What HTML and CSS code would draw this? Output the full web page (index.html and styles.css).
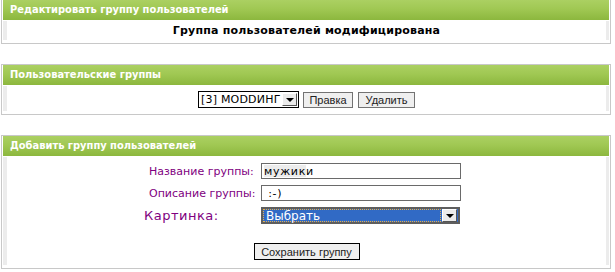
FILE: index.html
```html
<!DOCTYPE html>
<html lang="ru">
<head>
  <meta charset="UTF-8">
  <title>Группы пользователей</title>
  <link rel="stylesheet" href="styles.css">
</head>
<body>
  <!-- сообщение об изменении -->
  <div class="panel panel-first">
    <div class="panel-head">Редактировать группу пользователей</div>
    <div class="panel-body notice">Группа пользователей модифицирована</div>
  </div>

  <!-- выбор группы -->
  <div class="panel">
    <div class="panel-head">Пользовательские группы</div>
    <div class="panel-body group-pick">
      <div class="combo combo-group">
        <span class="combo-value">[3] MODDИНГ</span>
        <span class="combo-arrow"></span>
      </div>
      <button type="button" class="btn btn-edit">Правка</button>
      <button type="button" class="btn btn-del">Удалить</button>
    </div>
  </div>

  <!-- новая группа -->
  <div class="panel">
    <div class="panel-head">Добавить группу пользователей</div>
    <div class="panel-body">
      <div class="group-form">
        <label class="field-label">Название группы:</label>
        <input type="text" class="field field-name" value="мужики">
        <label class="field-label">Описание группы:</label>
        <input type="text" class="field" value=" :-)">
        <label class="field-label field-label-big">Картинка:</label>
        <div class="combo combo-pic">
          <span class="combo-value">Выбрать</span>
          <span class="combo-arrow"></span>
        </div>
      </div>
      <div class="form-actions">
        <button type="button" class="btn btn-save">Сохранить группу</button>
      </div>
    </div>
  </div>
</body>
</html>
```
FILE: styles.css
```css
body { margin:0; background:#fff; font-family:"DejaVu Sans", Verdana, sans-serif; font-size:11px; color:#000; }

.panel { margin:0 4px 0 1px; border:1px solid #c8c8c8; padding:0 1px 3px; }
.panel + .panel { margin-top:20px; }
.panel-first { border-top:none; }
.panel-head { height:20px; line-height:20px; padding-left:7px; color:#fff; font-family:"DejaVu Sans Condensed", "DejaVu Sans", sans-serif; font-stretch:condensed; font-weight:bold; font-size:11px;
  background:linear-gradient(#abd062, #a0c853 45%, #8cb73e); }
.panel-body { margin-top:1px; border-left:4px solid #ececec; border-right:3px solid #ececec; }

.notice { height:19px; line-height:19px; text-align:center; font-weight:bold; font-size:11px; letter-spacing:0.2px; }

.group-pick { display:flex; justify-content:center; align-items:center; gap:4px; padding:5px 0 3px; }
.group-pick .btn-del { margin-left:1px; }

.combo { display:flex; align-items:center; box-sizing:border-box; font-size:12px; }
.combo-value { flex:1; white-space:nowrap; }
.combo-arrow { width:15px; height:13px; box-sizing:border-box; background:#ebebeb; border:1px solid; border-color:#fff #555 #555 #fff; display:flex; align-items:center; justify-content:center; }
.combo-arrow::after { content:""; border-top:4px solid #000; border-left:4px solid transparent; border-right:4px solid transparent; }

.combo-group { width:101px; height:17px; border:1px solid #000; padding:0 1px 0 2px; font-size:11px; letter-spacing:0.2px; }

.btn { height:16px; padding:0; background:#efefef; border:1px solid #737373; font-family:"Liberation Sans", Tahoma, sans-serif; font-size:11px; color:#222; cursor:pointer; }
.btn-edit { width:50px; }
.btn-del { width:57px; }

.group-form { display:grid; grid-template-columns:117px 200px; row-gap:6px; align-items:center; margin-left:137px; padding-top:6px; }
.field-label { color:#800080; padding-left:5px; }
.field-label-big { padding-left:0; font-size:13px; letter-spacing:0.5px; }
.field { box-sizing:border-box; width:200px; height:16px; margin:0; padding:0 2px; border:1px solid #6a6a6a; font-family:"DejaVu Sans", Verdana, sans-serif; font-size:11px; letter-spacing:0.7px; color:#000; }
.field-name { background:linear-gradient(#ececec, #ececec) no-repeat 2px 1px / 42px 12px, #fff; }

.combo-pic { width:199px; height:17px; border:2px solid #5e5e5e; background:#316ac5; color:#fff; padding:0 1px 0 0; }
.combo-pic .combo-value { align-self:stretch; line-height:11px; padding:1px 2px; margin-right:1px; border:1px dotted #e8b04a; }

.form-actions { display:flex; justify-content:center; padding:19px 0 5px; }
.btn-save { width:106px; height:17px; border-color:#000; }
```
